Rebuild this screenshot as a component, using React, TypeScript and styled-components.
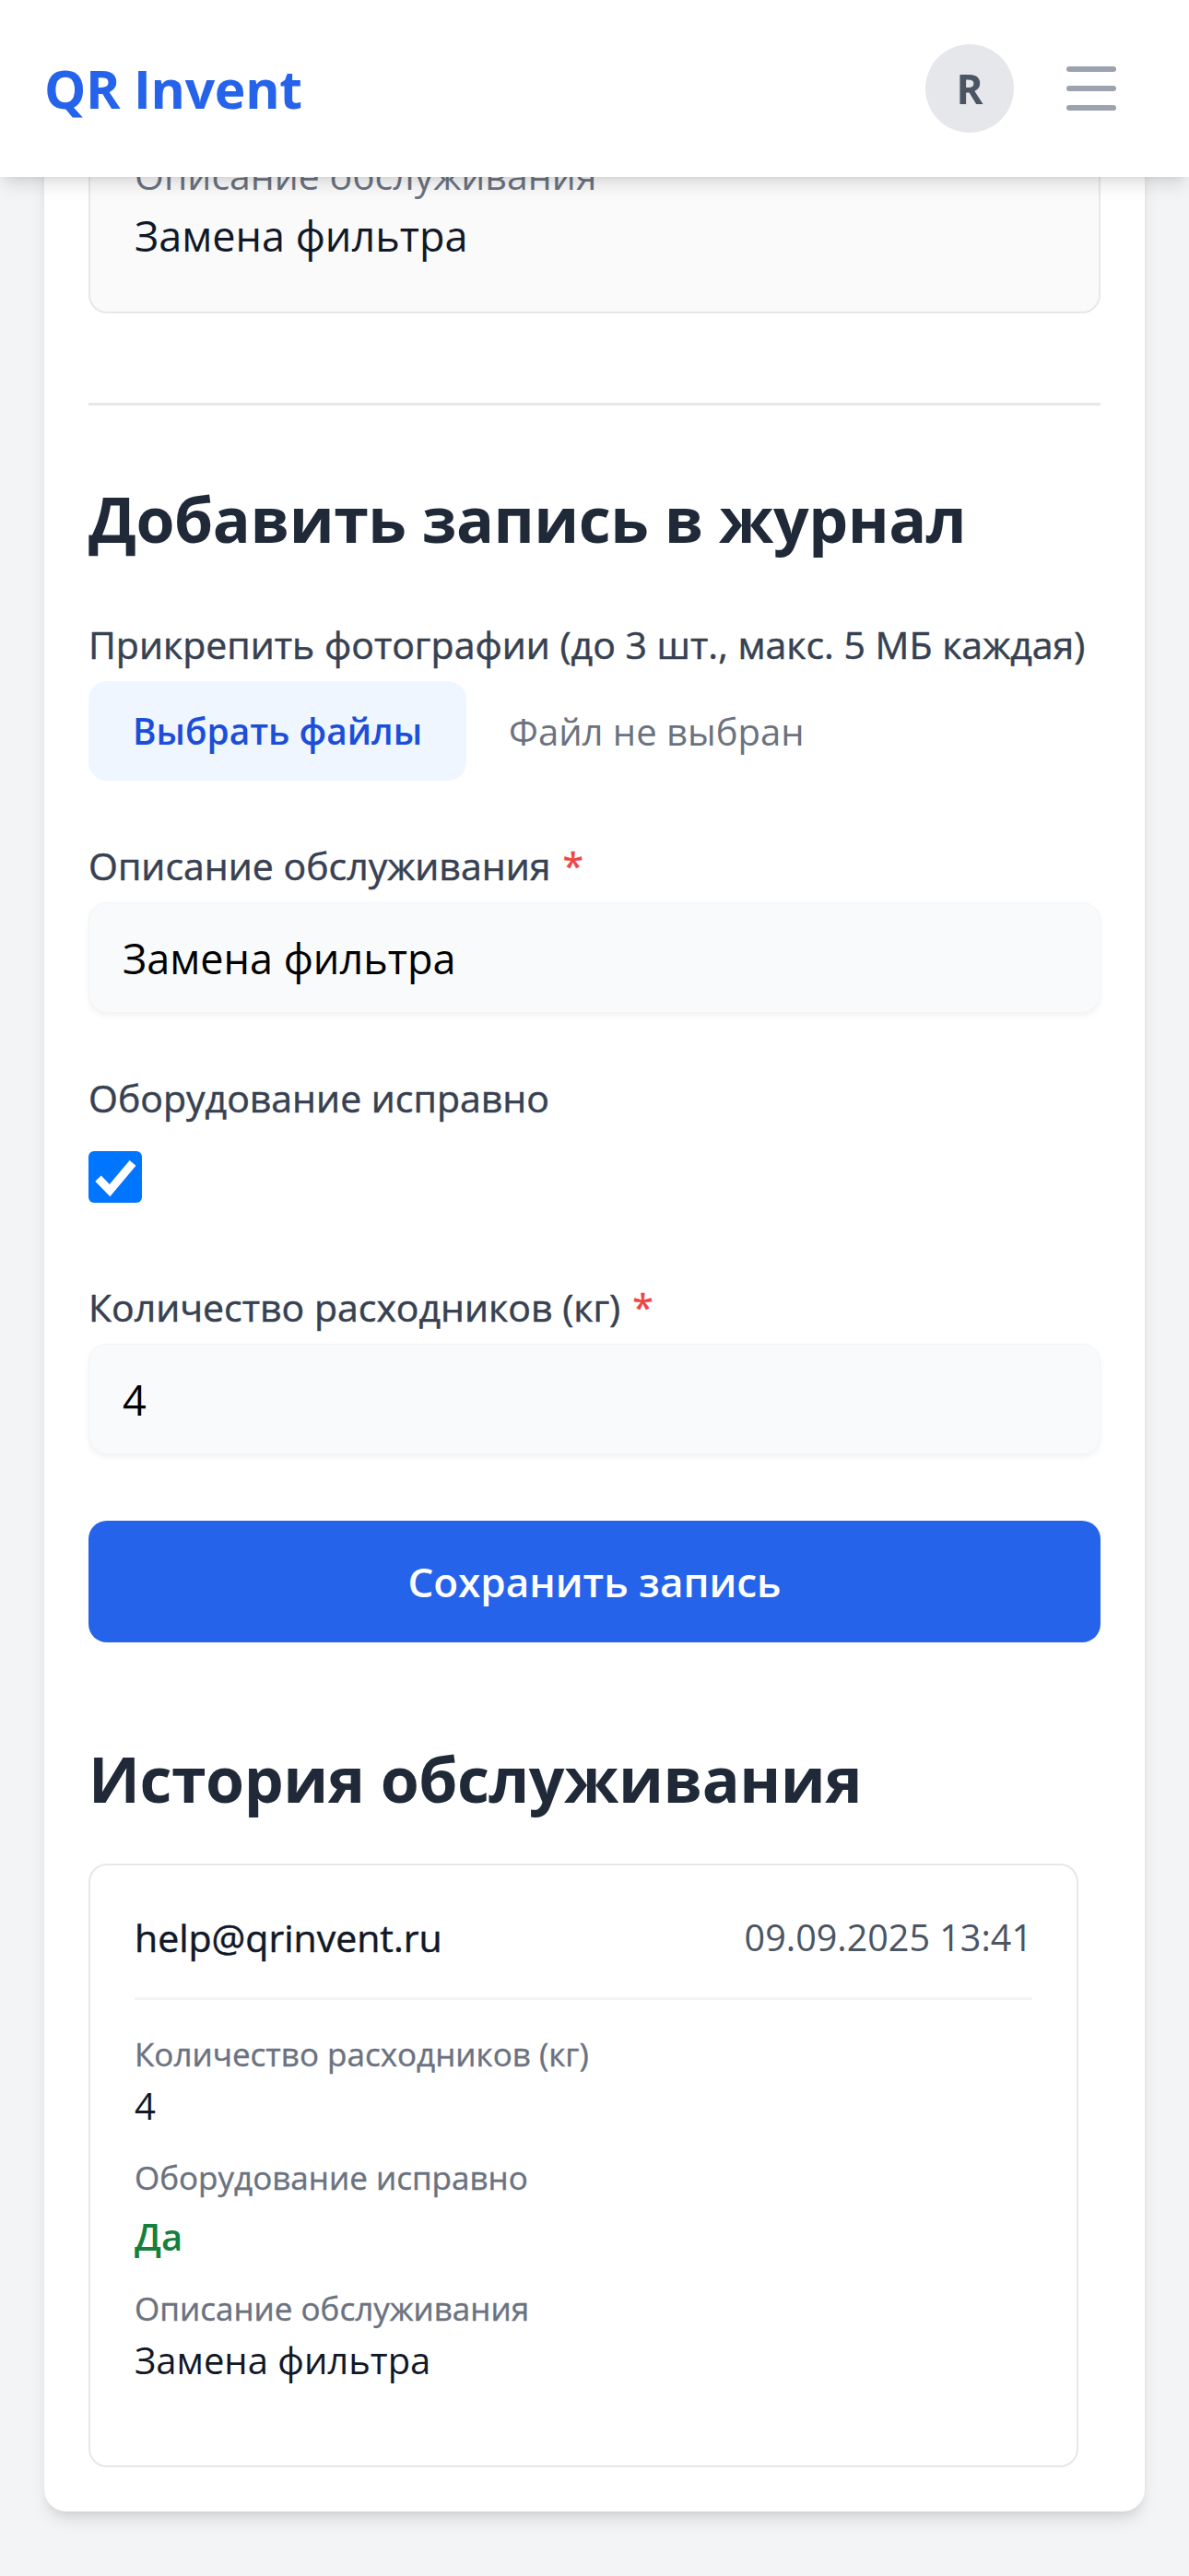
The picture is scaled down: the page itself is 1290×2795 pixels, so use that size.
import styled, { createGlobalStyle } from "styled-components";
import { Menu } from "lucide-react";

const GlobalStyle = createGlobalStyle`
  * {
    box-sizing: border-box;
  }

  body {
    margin: 0;
    background: #f3f4f6;
    font-family: "Open Sans", "Noto Sans", sans-serif;
    color: #111827;
  }
`;

const history = [
  { label: "Количество расходников (кг)", value: "4" },
  { label: "Оборудование исправно", value: "Да", ok: true },
  { label: "Описание обслуживания", value: "Замена фильтра" },
];

const Header = styled.header`
  position: fixed;
  top: 0;
  left: 0;
  right: 0;
  z-index: 10;
  height: 192px;
  padding: 0 46px 0 48px;
  display: flex;
  align-items: center;
  justify-content: space-between;
  background: #fff;
  box-shadow: 0 12px 18px -3px rgba(0, 0, 0, 0.1),
    0 6px 12px -6px rgba(0, 0, 0, 0.1);
`;

const Logo = styled.div`
  font-size: 57px;
  font-weight: 700;
  color: #2563eb;
  letter-spacing: -0.3px;
`;

const HeaderActions = styled.div`
  display: flex;
  align-items: center;
  gap: 24px;
`;

const Avatar = styled.div`
  width: 96px;
  height: 96px;
  border-radius: 50%;
  background: #e5e7eb;
  color: #4b5563;
  display: flex;
  align-items: center;
  justify-content: center;
  font-size: 44px;
  font-weight: 700;
`;

const MenuButton = styled.button`
  border: none;
  background: none;
  padding: 0 24px;
  display: flex;
  color: #9ca3af;
`;

const Main = styled.main`
  padding: 62px 48px 72px;
`;

const Card = styled.div`
  background: #fff;
  border-radius: 24px;
  padding: 48px;
  box-shadow: 0 12px 18px -3px rgba(0, 0, 0, 0.1),
    0 6px 12px -6px rgba(0, 0, 0, 0.1);
`;

const InfoBox = styled.div`
  background: #fafafa;
  border: 2px solid #e5e7eb;
  border-radius: 20px;
  padding: 48px 48px 46px;
`;

const InfoLabel = styled.div`
  font-size: 41px;
  line-height: 60px;
  color: #6b7280;
`;

const InfoValue = styled.div`
  font-size: 45px;
  line-height: 72px;
  color: #111827;
`;

const Section = styled.section`
  margin-top: 97px;
  padding-top: 75px;
  border-top: 3px solid #e5e7eb;
`;

const Title = styled.h2<{ $gap: number }>`
  margin: 0 0 ${(p) => p.$gap}px;
  font-size: 68px;
  line-height: 96px;
  font-weight: 700;
  color: #1f2937;
  letter-spacing: -0.5px;
`;

const Field = styled.div`
  margin-bottom: 62px;
`;

// medium weight: the installed font has no 500, so thicken the regular cut a little
const Label = styled.label`
  display: block;
  margin-bottom: 10px;
  font-size: 41px;
  line-height: 60px;
  font-weight: 500;
  color: #374151;
  -webkit-text-stroke: 0.5px currentColor;
`;

const Required = styled.span`
  margin-left: 13px;
  color: #ef4444;
`;

const FileRow = styled.div`
  display: flex;
  align-items: center;
  gap: 46px;
`;

const FileButton = styled.span`
  padding: 24px 48px;
  border-radius: 20px;
  background: #eff6ff;
  color: #1d4ed8;
  font-size: 38.8px;
  line-height: 60px;
  font-weight: 600;
`;

const FileName = styled.span`
  font-size: 40px;
  color: #6b7280;
`;

const Input = styled.div`
  height: 120px;
  padding: 0 36px;
  display: flex;
  align-items: center;
  background: #f9fafb;
  border: 1px solid #f3f4f6;
  border-radius: 20px;
  box-shadow: 0 3px 6px rgba(0, 0, 0, 0.05);
  font-size: 45px;
  color: #000;
`;

const CheckRow = styled.div`
  padding: 18px 0 21px;
`;

const CheckBox = styled.span`
  width: 58px;
  height: 56px;
  border-radius: 6px;
  background: #0075ff;
  display: flex;
  align-items: center;
  justify-content: center;
`;

const SubmitButton = styled.button`
  width: 100%;
  height: 132px;
  margin-top: 10px;
  border: none;
  border-radius: 20px;
  background: #2563eb;
  color: #fff;
  font-family: inherit;
  font-size: 44px;
  font-weight: 600;
`;

const HistorySection = styled.section`
  margin-top: 100px;
`;

const HistoryList = styled.div`
  padding-right: 24px;
`;

const HistoryCard = styled.div`
  border: 2px solid #e5e7eb;
  border-radius: 20px;
  padding: 48px 48px 84px;
  background: #fff;
`;

const HistoryHead = styled.div`
  display: flex;
  align-items: center;
  justify-content: space-between;
  padding-bottom: 35px;
  border-bottom: 3px solid #f3f4f6;
  margin-bottom: 35px;
`;

const Author = styled.span`
  font-size: 41px;
  line-height: 60px;
  font-weight: 500;
  color: #111827;
  -webkit-text-stroke: 0.5px currentColor;
`;

const Stamp = styled.span`
  font-size: 39.5px;
  line-height: 60px;
  color: #4b5563;
`;

const DetailList = styled.div`
  display: flex;
  flex-direction: column;
  gap: 24px;
`;

const DetailLabel = styled.div`
  font-size: 35px;
  line-height: 48px;
  font-weight: 500;
  color: #6b7280;
  -webkit-text-stroke: 0.4px currentColor;
`;

const DetailValue = styled.div<{ $ok?: boolean }>`
  margin-top: ${(p) => (p.$ok ? 10 : 2)}px;
  font-size: 40px;
  line-height: 60px;
  font-weight: ${(p) => (p.$ok ? 600 : 400)};
  color: ${(p) => (p.$ok ? "#15803d" : "#111827")};
`;

export default function App() {
  return (
    <>
      <GlobalStyle />
      <Header>
        <Logo>QR Invent</Logo>
        <HeaderActions>
          <Avatar>R</Avatar>
          <MenuButton>
            <Menu size={72} strokeWidth={2} />
          </MenuButton>
        </HeaderActions>
      </Header>
      <Main>
        <Card>
          <InfoBox>
            <InfoLabel>Описание обслуживания</InfoLabel>
            <InfoValue>Замена фильтра</InfoValue>
          </InfoBox>

          <Section>
            <Title $gap={58}>Добавить запись в журнал</Title>

            <Field>
              <Label>Прикрепить фотографии (до 3 шт., макс. 5 МБ каждая)</Label>
              <FileRow>
                <FileButton>Выбрать файлы</FileButton>
                <FileName>Файл не выбран</FileName>
              </FileRow>
            </Field>

            <Field>
              <Label>
                Описание обслуживания<Required>*</Required>
              </Label>
              <Input>Замена фильтра</Input>
            </Field>

            <Field>
              <Label>Оборудование исправно</Label>
              <CheckRow>
                <CheckBox>
                  <svg width="58" height="56" viewBox="0 0 20 20">
                    <polyline
                      points="3.4,10.6 7.9,15.2 16.8,4.6"
                      fill="none"
                      stroke="#fff"
                      strokeWidth="3.2"
                    />
                  </svg>
                </CheckBox>
              </CheckRow>
            </Field>

            <Field>
              <Label>
                Количество расходников (кг)<Required>*</Required>
              </Label>
              <Input>4</Input>
            </Field>

            <SubmitButton>Сохранить запись</SubmitButton>
          </Section>

          <HistorySection>
            <Title $gap={44}>История обслуживания</Title>
            <HistoryList>
              <HistoryCard>
                <HistoryHead>
                  <Author>help@qrinvent.ru</Author>
                  <Stamp>09.09.2025 13:41</Stamp>
                </HistoryHead>
                <DetailList>
                  {history.map((item) => (
                    <div key={item.label}>
                      <DetailLabel>{item.label}</DetailLabel>
                      <DetailValue $ok={item.ok}>{item.value}</DetailValue>
                    </div>
                  ))}
                </DetailList>
              </HistoryCard>
            </HistoryList>
          </HistorySection>
        </Card>
      </Main>
    </>
  );
}
